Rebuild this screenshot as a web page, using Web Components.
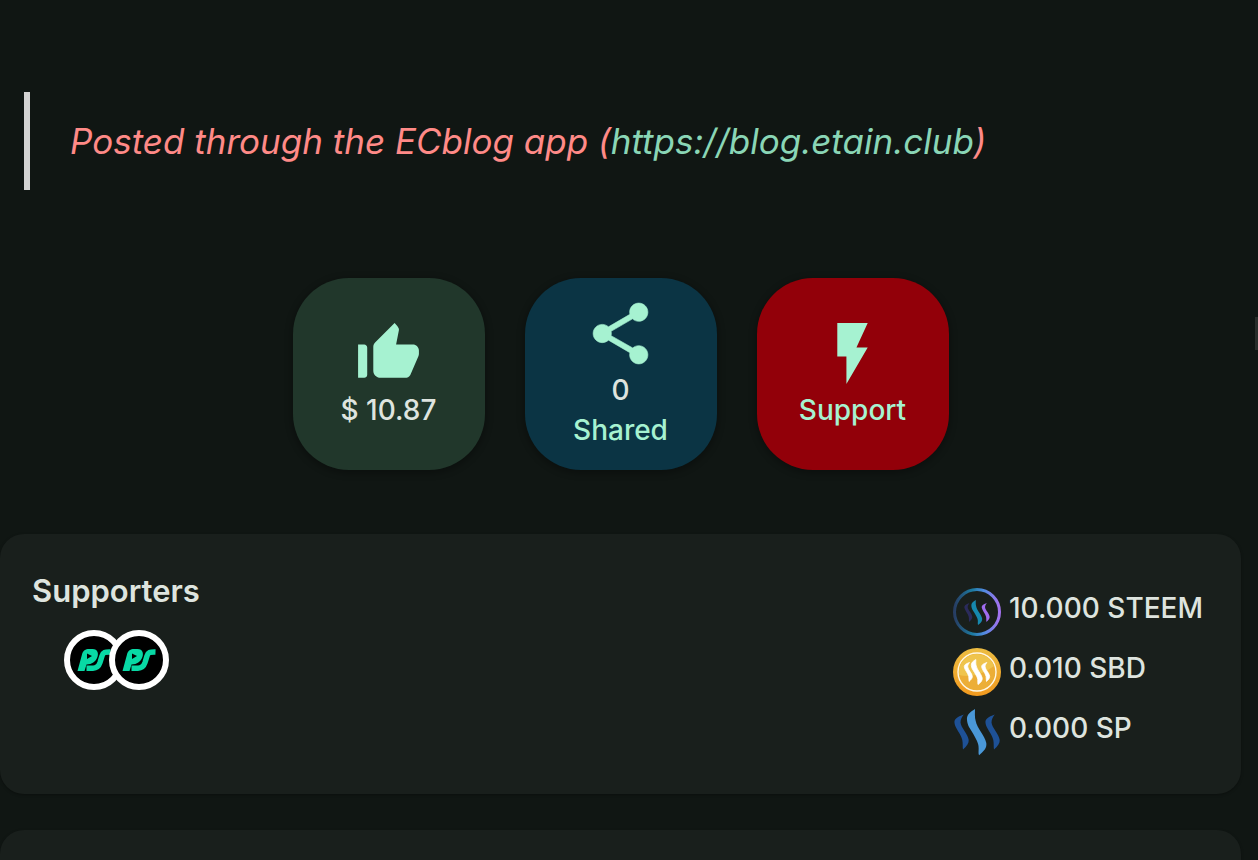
<!DOCTYPE html>
<html lang="en">
<head>
<meta charset="utf-8">
<meta name="viewport" content="width=device-width, initial-scale=1">
<title>ECblog post</title>
<style>
  html { background: #101613; }
  body { margin: 0; height: 100vh; overflow: hidden; background: #101613; color: #dee4df; font: 500 28px/40px Inter, "Liberation Sans", sans-serif; }
</style>
</head>
<body>
<post-page></post-page>
<script>
const define = (name, html) => customElements.define(name, class extends HTMLElement {
  constructor() {
    super();
    const t = document.createElement('template');
    t.innerHTML = html;
    this.attachShadow({ mode: 'open' }).append(t.content.cloneNode(true));
  }
});

const sideWave = 'M10.700 6.500C4 9 1 11 1.500 15 2 20 8 26 9.300 32 10 36 9.500 39 10 41.500 14 38 16 35 15.700 32 15 26 8 20 7.500 14.500 7.500 11 9 9 10.700 6.500Z';
const midWave = 'M22 1C17 4 13.500 7 14 12 14.500 18 17 20 19.700 25 23 31 25 34 25.500 38 26 42 25 45 26 47.300 31 43 34 40 33.300 35 32 28 24 20 22.700 13 21.500 9 22 5 22 1Z';
const waves = (a, b, c) => `<path fill="${a}" d="${sideWave}"/><path fill="${b}" d="${midWave}"/><path fill="${c}" transform="translate(31)" d="${sideWave}"/>`;

define('post-quote', `
<style>
  :host { display: block; }
  blockquote { margin: 0; padding: 24px 16px 24px 40px; border-left: 6px solid #d3d3d3; color: #ff8a87; font-size: 35px; line-height: 50px; font-weight: 400; font-style: italic; }
</style>
<blockquote><slot></slot></blockquote>`);

define('action-tile', `
<style>
  :host { display: block; }
  button { display: flex; flex-direction: column; align-items: center; justify-content: center; width: 192px; height: 192px; margin: 0; padding: 0 0 1px; border: 0; border-radius: 56px; background: var(--tile); color: #a6f2d1; font: inherit; box-shadow: 0 2px 6px 2px rgba(0,0,0,.25); cursor: pointer; }
  ::slotted(svg) { display: block; width: 73px; height: 73px; fill: #a6f2d1; }
  ::slotted(span) { display: block; }
</style>
<button type="button"><slot></slot></button>`);

define('surface-card', `
<style>
  :host { display: block; background: #191f1c; border-radius: 24px; box-shadow: 0 1px 3px rgba(0,0,0,.3); }
</style>
<slot></slot>`);

define('user-avatar', `
<style>
  :host { display: block; width: 60px; height: 60px; }
  a, svg { display: block; }
</style>
<a href="#" aria-label="Supporter">
<svg width="60" height="60" viewBox="0 0 60 60">
  <circle cx="30" cy="30" r="27" fill="#000" stroke="#fff" stroke-width="6"/>
  <path fill="#08d9a5" fill-rule="evenodd" d="M13.500 41 18 24.500C19 20.500 21.500 19 25 19H28.500C34 19 35 24 33 28 31.500 31.500 28 34.500 22.500 34.500L20.500 41ZM23 23.500V29L28 26Z"/>
  <path fill="none" stroke="#08d9a5" stroke-width="5.500" d="M22.500 38.200H29C33 38.200 35 35.500 36 32.500L38 26C39 22.500 41 21.800 46.500 22"/>
</svg></a>`);

define('token-row', `
<style>
  :host { display: flex; gap: 8px; height: 60px; align-items: flex-start; }
  ::slotted(svg) { display: block; width: 48px; height: 48px; flex: none; }
</style>
<slot name="icon"></slot><span><slot></slot></span>`);

define('supporters-panel', `
<style>
  :host { display: flex; justify-content: space-between; min-height: 260px; box-sizing: border-box; padding: 36px 38px 26px 32px; }
  h2 { margin: 0; font-size: 31px; line-height: 42px; font-weight: 600; }
  .people { display: flex; padding: 18px 0 0 32px; }
  user-avatar + user-avatar { margin-left: -15px; }
  .tokens { padding-top: 18px; }
</style>
<section><h2>Supporters</h2><div class="people"><user-avatar></user-avatar><user-avatar></user-avatar></div></section>
<div class="tokens">
  <token-row>
    <svg slot="icon" viewBox="0 0 48 48">
      <defs><linearGradient id="ring"><stop offset="0" stop-color="#273d63"/><stop offset=".4" stop-color="#1c7ca2"/><stop offset=".65" stop-color="#4f8be0"/><stop offset="1" stop-color="#a472f0"/></linearGradient></defs>
      <circle cx="24" cy="24" r="22.500" fill="none" stroke="url(#ring)" stroke-width="3"/>
      <g transform="translate(10.500 11.500) scale(.56 .54)">${waves('#2b2b5c', '#1688ae', '#a06cf0')}</g>
    </svg>10.000 STEEM
  </token-row>
  <token-row>
    <svg slot="icon" viewBox="0 0 48 48">
      <defs><linearGradient id="coin" x2="0" y2="1"><stop offset="0" stop-color="#edbd42"/><stop offset="1" stop-color="#f29a1f"/></linearGradient></defs>
      <circle cx="24" cy="24" r="24" fill="url(#coin)"/>
      <circle cx="24" cy="24" r="19" fill="#ecae37" stroke="#fff8e5" stroke-width="1.400"/>
      <path fill="#efc44d" d="M6 24A18 18 0 0 1 41 18Q24 31 6 27Z"/>
      <g transform="translate(10.500 11) scale(.56 .54)" stroke="#fff" stroke-width="1.500">${waves('#fff', '#fff', '#fff')}</g>
    </svg>0.010 SBD
  </token-row>
  <token-row>
    <svg slot="icon" viewBox="0 0 48 48">${waves('#1e5196', '#4a98d8', '#1e5196')}</svg>0.000 SP
  </token-row>
</div>`);

define('post-page', `
<style>
  :host { display: block; position: relative; padding: 92px 17px 0 0; }
  post-quote { margin: 0 24px; }
  a { color: #8ad6b6; text-decoration: none; }
  .actions { display: flex; justify-content: center; gap: 40px; padding: 88px 0 64px; }
  .value { color: #dee4df; }
  .like { --tile: #21372b; } .share { --tile: #0b3444; } .support { --tile: #920009; }
  surface-card + surface-card { margin-top: 36px; min-height: 30px; border-radius: 24px 24px 0 0; }
  .thumb { position: absolute; right: 0; top: 317px; width: 3px; height: 33px; background: #292e2b; }
</style>
<post-quote>Posted through the ECblog app (<a href="https://blog.etain.club">https://blog.etain.club</a>)</post-quote>
<div class="actions">
  <action-tile class="like"><svg viewBox="0 0 24 24"><path d="M2 20h2c.55 0 1-.45 1-1v-9c0-.55-.45-1-1-1H2v11zm19.830-7.120c.11-.25.17-.52.17-.8V11c0-1.100-.9-2-2-2h-5.500l.92-4.650c.05-.22.02-.46-.08-.66-.23-.45-.52-.86-.88-1.220L14 2 7.590 8.410C7.210 8.790 7 9.300 7 9.830v7.840C7 18.950 8.050 20 9.340 20h8.110c.7 0 1.360-.37 1.720-.97l2.660-6.150z"/></svg><span class="value">$ 10.87</span></action-tile>
  <action-tile class="share"><svg viewBox="0 0 24 24"><path d="M18 16c-.8 0-1.450.3-1.960.77L8.910 12.700c.05-.23.09-.46.09-.7s-.04-.47-.09-.7l7.050-4.110c.54.5 1.250.81 2.040.81 1.660 0 3-1.340 3-3s-1.340-3-3-3-3 1.340-3 3c0 .24.04.47.09.7L8.040 9.810C7.500 9.310 6.790 9 6 9c-1.660 0-3 1.340-3 3s1.340 3 3 3c.79 0 1.500-.31 2.040-.81l7.050 4.120c-.05.22-.09.45-.09.69 0 1.660 1.340 3 3 3s3-1.340 3-3-1.340-3-3-3z" stroke="#a6f2d1" stroke-width=".2"/></svg><span class="value">0</span><span>Shared</span></action-tile>
  <action-tile class="support"><svg viewBox="0 0 24 24"><path d="M7 2v11h3v9l7-12h-3.700l3.700-8z"/></svg><span>Support</span></action-tile>
</div>
<surface-card><supporters-panel></supporters-panel></surface-card>
<surface-card></surface-card>
<div class="thumb"></div>`);
</script>
</body>
</html>
